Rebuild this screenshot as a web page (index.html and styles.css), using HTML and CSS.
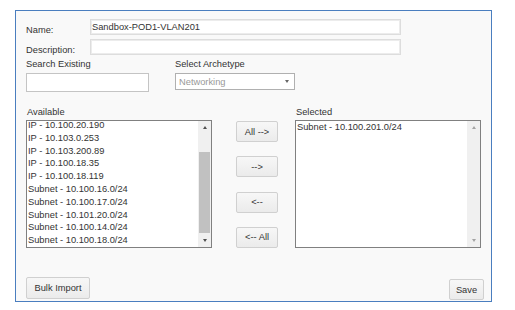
FILE: index.html
```html
<!DOCTYPE html>
<html>
<head>
    <title>Network Group</title>
    <link rel="stylesheet" href="styles.css">
</head>
<body>

<div class="panel">
    <div class="field-row">
        <label class="field-label">Name:</label>
        <input class="text-input" type="text" value="Sandbox-POD1-VLAN201">
    </div>
    <div class="field-row second">
        <label class="field-label">Description:</label>
        <input class="text-input" type="text">
    </div>

    <div class="filter-row">
        <div class="filter search-col">
            <div class="small-label">Search Existing</div>
            <input class="search-input" type="text">
        </div>
        <div class="filter">
            <div class="small-label">Select Archetype</div>
            <div class="select-box">
                <span>Networking</span>
                <span class="caret"></span>
            </div>
        </div>
    </div>

    <div class="picker">
        <div class="picker-col">
            <div class="small-label">Available</div>
            <div class="listbox">
                <div class="list-items scrolled">
                    <div class="item">IP - 10.100.20.190</div>
                    <div class="item">IP - 10.103.0.253</div>
                    <div class="item">IP - 10.103.200.89</div>
                    <div class="item">IP - 10.100.18.35</div>
                    <div class="item">IP - 10.100.18.119</div>
                    <div class="item">Subnet - 10.100.16.0/24</div>
                    <div class="item">Subnet - 10.100.17.0/24</div>
                    <div class="item">Subnet - 10.101.20.0/24</div>
                    <div class="item">Subnet - 10.100.14.0/24</div>
                    <div class="item">Subnet - 10.100.18.0/24</div>
                </div>
                <div class="scrollbar">
                    <div class="arrow"><span class="arrow-up"></span></div>
                    <div class="track"><div class="thumb"></div></div>
                    <div class="arrow"><span class="arrow-down"></span></div>
                </div>
            </div>
        </div>

        <div class="move-buttons">
            <button class="btn move">All --&gt;</button>
            <button class="btn move">--&gt;</button>
            <button class="btn move">&lt;--</button>
            <button class="btn move">&lt;-- All</button>
        </div>

        <div class="picker-col">
            <div class="small-label">Selected</div>
            <div class="listbox">
                <div class="list-items">
                    <div class="item">Subnet - 10.100.201.0/24</div>
                </div>
                <div class="scrollbar">
                    <div class="arrow"><span class="arrow-up off"></span></div>
                    <div class="track"></div>
                    <div class="arrow"><span class="arrow-down off"></span></div>
                </div>
            </div>
        </div>
    </div>

    <div class="footer">
        <button class="btn bulk">Bulk Import</button>
        <button class="btn save">Save</button>
    </div>
</div>

</body>
</html>
```

FILE: styles.css
```css
body { margin: 0; font-family: "Liberation Sans", Arial, sans-serif; font-size: 9.3px; color: #333; background: #fff; }

.panel { box-sizing: border-box; width: 477px; height: 292px; margin: 10px 0 0 15px; padding: 8px 7px 2px 10px; border: 1px solid #4a7ebf; background: #f9f9f9; }

.field-row { display: flex; align-items: flex-start; height: 16px; }
.field-row.second { margin-top: 4px; }
.field-label { width: 64px; padding-top: 6px; line-height: 11px; }
.text-input { box-sizing: border-box; width: 311px; height: 16px; margin: 0; padding: 0 1px; border: 1px solid #ddd; box-shadow: inset 0 0 0 1px #ececec; background: #fff; font: inherit; color: #333; outline: none; }

.filter-row { display: flex; margin-top: 3px; }
.search-col { width: 149px; }
.small-label { height: 12px; line-height: 12px; }
.filter .small-label { margin-bottom: 3px; }
.search-input { box-sizing: border-box; width: 123px; height: 19px; margin: 0; border: 1px solid #c4c4c4; background: #fff; font: inherit; }
.select-box { box-sizing: border-box; width: 120px; height: 17px; display: flex; align-items: center; justify-content: space-between; padding: 0 5px 0 3px; border: 1px solid #b0b0b0; background: #fff; color: #999; }
.caret { width: 0; height: 0; border-left: 2.5px solid transparent; border-right: 2.5px solid transparent; border-top: 3px solid #666; }

.picker { display: flex; margin-top: 14px; }
.picker-col { width: 186px; }
.picker-col .small-label { margin-bottom: 2px; padding-left: 1px; }
.listbox { box-sizing: border-box; height: 128px; display: flex; border: 1px solid #808080; background: #fff; overflow: hidden; }
.list-items { flex: 1; overflow: hidden; }
.list-items.scrolled { margin-top: -2px; }
.item { height: 12.8px; line-height: 12.8px; padding-left: 1px; white-space: nowrap; }

.scrollbar { width: 13px; display: flex; flex-direction: column; background: #f0f0f0; }
.arrow { height: 13px; display: flex; align-items: center; justify-content: center; }
.arrow-up { width: 0; height: 0; border-left: 2.5px solid transparent; border-right: 2.5px solid transparent; border-bottom: 3px solid #505050; }
.arrow-down { width: 0; height: 0; border-left: 2.5px solid transparent; border-right: 2.5px solid transparent; border-top: 3px solid #505050; }
.arrow-up.off { border-bottom-color: #a3a3a3; }
.arrow-down.off { border-top-color: #a3a3a3; }
.track { flex: 1; padding-top: 18px; }
.thumb { height: 81px; margin: 0 1px 0 1px; background: #c1c1c1; }

.move-buttons { display: flex; flex-direction: column; justify-content: space-between; margin: 15px 17px 0 24px; height: 127px; }
.btn { box-sizing: border-box; margin: 0; padding: 0; border: 1px solid #d0d0d0; border-radius: 2px; background: linear-gradient(#f7f7f7, #ebebeb); font: inherit; color: #333; cursor: pointer; }
.move { width: 42px; height: 21px; }

.footer { display: flex; justify-content: space-between; align-items: flex-end; margin-top: 29px; }
.bulk { width: 64px; height: 22px; margin-bottom: 1px; }
.save { width: 35px; height: 21px; }
```
